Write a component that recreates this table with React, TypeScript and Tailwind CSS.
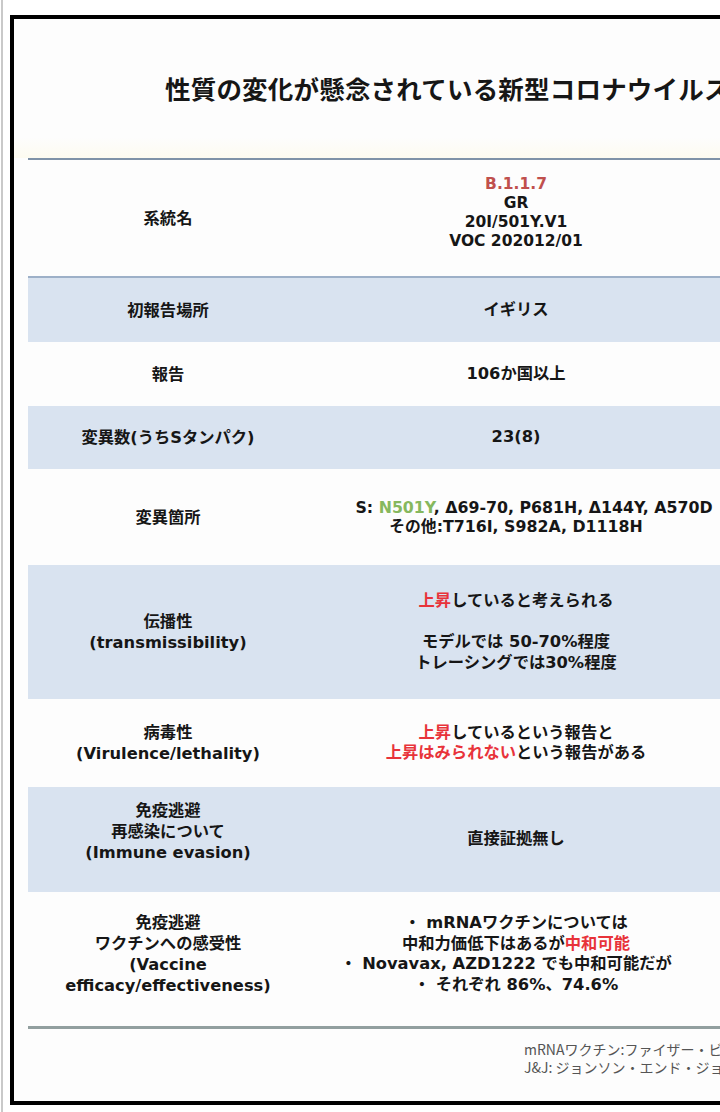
import React from "react";

const F = { fontFamily: '"Noto Sans CJK JP", "Noto Sans", sans-serif' };
const T = { fontFamily: '"DejaVu Sans", "Noto Sans CJK JP", sans-serif' };

function Row({
  label,
  children,
  blue,
  h,
}: {
  label: React.ReactNode;
  children: React.ReactNode;
  blue?: boolean;
  h: string;
}) {
  return (
    <div className={`grid grid-cols-[280px_416px_1fr] ${h} ${blue ? "bg-[#d9e3f0]" : "bg-[#fdfdfd]"}`}>
      <div className="flex flex-col items-center justify-center text-center leading-[21px] whitespace-nowrap">{label}</div>
      <div className="flex flex-col items-center justify-center text-center leading-[20.5px] whitespace-nowrap">{children}</div>
      <div />
    </div>
  );
}

export default function App() {
  return (
    <div style={F} className="w-[720px] h-[1112px] bg-white overflow-hidden flex">
      <div className="w-[4px] h-full flex justify-center shrink-0">
        <div className="w-[2px] h-full bg-[#c9c9c9]" />
      </div>
      <div className="pt-[15px] pl-[6px] shrink-0">
        <div className="w-[820px] h-[1090px] border-4 border-black bg-[#fdfdfd] flex flex-col text-[#161616] font-bold">
          <div className="h-[139px] flex items-center pl-[151px] text-[25.5px] tracking-[0.2px] whitespace-nowrap bg-gradient-to-b from-[#fdfdfd] from-85% to-[#fdfbf0]">
            性質の変化が懸念されている新型コロナウイルス変異株
          </div>
          <div style={T} className="ml-[14px] flex flex-col text-[16.3px]">
            <div className="h-[2px] bg-[#7f92a8]" />
            <Row h="h-[116px]" label={<span>系統名</span>}>
              <div className="-mt-[10px] flex flex-col items-center leading-[19px] text-[15.5px]">
                <span className="text-[#c0504d]">B.1.1.7</span>
                <span>GR</span>
                <span>20I/501Y.V1</span>
                <span>VOC 202012/01</span>
              </div>
            </Row>
            <div className="h-[2px] bg-[#9db0c8]" />
            <Row blue h="h-[64px]" label={<span>初報告場所</span>}>
              <span>イギリス</span>
            </Row>
            <Row h="h-[64px]" label={<span>報告</span>}>
              <span>106か国以上</span>
            </Row>
            <Row blue h="h-[63px]" label={<span>変異数(うちSタンパク)</span>}>
              <span>23(8)</span>
            </Row>
            <Row h="h-[96px]" label={<span>変異箇所</span>}>
              <span className="pl-[36px] text-[15.8px] leading-[19px]">
                S: <span className="text-[#86b85e]">N501Y</span>, Δ69-70, P681H, Δ144Y, A570D
              </span>
              <span className="text-[15.8px] leading-[19px]">その他:T716I, S982A, D1118H</span>
            </Row>
            <Row
              blue
              h="h-[134px]"
              label={
                <>
                  <span>伝播性</span>
                  <span>(transmissibility)</span>
                </>
              }
            >
              <span>
                <span className="text-[#e8333a]">上昇</span>していると考えられる
              </span>
              <span>&nbsp;</span>
              <span>モデルでは 50-70%程度</span>
              <span>トレーシングでは30%程度</span>
            </Row>
            <Row
              h="h-[88px]"
              label={
                <>
                  <span>病毒性</span>
                  <span>(Virulence/lethality)</span>
                </>
              }
            >
              <span>
                <span className="text-[#e8333a]">上昇</span>しているという報告と
              </span>
              <span>
                <span className="text-[#e8333a]">上昇はみられない</span>という報告がある
              </span>
            </Row>
            <Row
              blue
              h="h-[105px]"
              label={
                <div className="-mt-[16px] flex flex-col items-center">
                  <span>免疫逃避</span>
                  <span>再感染について</span>
                  <span>(Immune evasion)</span>
                </div>
              }
            >
              <span>直接証拠無し</span>
            </Row>
            <Row
              h="h-[134px]"
              label={
                <div className="-mt-[10px] flex flex-col items-center">
                  <span>免疫逃避</span>
                  <span>ワクチンへの感受性</span>
                  <span>(Vaccine</span>
                  <span>efficacy/effectiveness)</span>
                </div>
              }
            >
              <div className="-mt-[10px] flex flex-col items-center">
                <span>・ mRNAワクチンについては</span>
                <span>
                  中和力価低下はあるが<span className="text-[#e8333a]">中和可能</span>
                </span>
                <span className="pr-[20px]">・ Novavax, AZD1222 でも中和可能だが</span>
                <span>・ それぞれ 86%、74.6%</span>
              </div>
            </Row>
            <div className="h-[3px] bg-[#929f9f]" />
          </div>
          <div className="pl-[510px] pt-[12px] text-[14px] leading-[17.5px] font-normal text-[#555] whitespace-nowrap">
            <div>mRNAワクチン:ファイザー・ビオンテック、モデルナ</div>
            <div>J&amp;J: ジョンソン・エンド・ジョンソン</div>
          </div>
        </div>
      </div>
    </div>
  );
}
